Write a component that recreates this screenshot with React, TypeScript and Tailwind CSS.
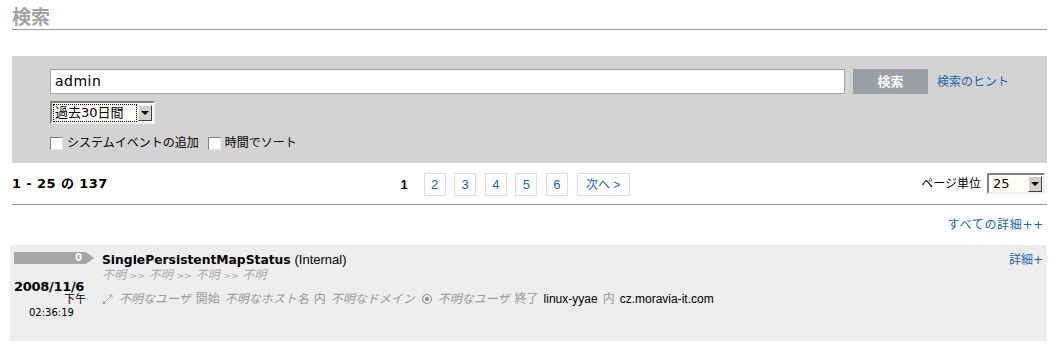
import React from "react";

const font = "font-['DejaVu_Sans','Noto_Sans_CJK_JP',sans-serif]";
const latin = "font-['Liberation_Sans','Noto_Sans_CJK_JP',sans-serif]";

const pages = ["2", "3", "4", "5", "6"];

function ArrowIcon() {
  return (
    <svg width="12" height="12" viewBox="0 0 12 12" className="shrink-0">
      <circle cx="2" cy="10" r="1.4" fill="#9a9a9a" />
      <path d="M3 9 L10 2" stroke="#b0b0b0" strokeWidth="1" fill="none" />
      <path d="M6.5 2 L10 2 L10 5.5" stroke="#b0b0b0" strokeWidth="1" fill="none" />
    </svg>
  );
}

function RadioIcon() {
  return (
    <svg width="12" height="12" viewBox="0 0 12 12" className="shrink-0">
      <circle cx="6" cy="6" r="4.5" stroke="#9a9a9a" strokeWidth="1.2" fill="none" />
      <circle cx="6" cy="6" r="2" fill="#8a8a8a" />
    </svg>
  );
}

function DropArrow() {
  return (
    <div className="w-[14px] h-[16px] bg-[#d4d0c8] border border-t-white border-l-white border-b-[#404040] border-r-[#404040] flex items-center justify-center">
      <div className="w-0 h-0 border-l-[4px] border-r-[4px] border-t-[4px] border-l-transparent border-r-transparent border-t-black" />
    </div>
  );
}

function Checkbox({ label }: { label: string }) {
  return (
    <label className="flex items-center gap-[4px]">
      <span className="w-[13px] h-[13px] bg-white border border-t-[#808080] border-l-[#808080] border-b-[#e8e8e8] border-r-[#e8e8e8]" />
      <span>{label}</span>
    </label>
  );
}

export default function App() {
  return (
    <div className={`w-[1060px] h-[348px] bg-white overflow-hidden ${font} text-[12px] text-black`}>
      <div className="pl-[12px] pr-[13px]">
        {/* Title */}
        <div className="h-[30px] pt-[6px] border-b border-[#999] text-[19px] font-bold text-[#a3a3a3] leading-[22px]">
          検索
        </div>

        {/* Search panel */}
        <div className="mt-[26px] h-[107px] bg-[#d3d3d3] pl-[38px] pt-[13px]">
          <div className="flex items-center">
            <div className="w-[795px] h-[25px] bg-white border border-[#a0a8ae] flex items-center pl-[4px] text-[14px] tracking-[0.5px]">
              admin
            </div>
            <button className="ml-[8px] w-[75px] h-[25px] bg-[#9aa0a6] text-white font-bold text-[13px]">
              検索
            </button>
            <a className="ml-[9px] text-[#1a66b0]">検索のヒント</a>
          </div>
          <div className="mt-[7px] w-[105px] h-[23px] border-2 border-t-[#808080] border-l-[#808080] border-b-[#f0f0f0] border-r-[#f0f0f0] bg-[#fffff8] flex items-center justify-between pl-[1px] pr-[1px]">
            <span className="border border-dotted border-black px-[1px] leading-[16px] w-[84px] text-[13px]">
              過去30日間
            </span>
            <DropArrow />
          </div>
          <div className="mt-[10px] flex items-center gap-[9px]">
            <Checkbox label="システムイベントの追加" />
            <Checkbox label="時間でソート" />
          </div>
        </div>

        {/* Result header */}
        <div className="h-[42px] border-b border-[#999] flex items-center relative">
          <div className="font-bold text-[13px] tracking-[0.4px]">
            1 - 25 の 137
          </div>
          <div className={`absolute left-[386px] top-[10px] flex items-center gap-[8.6px] ${latin} text-[13px]`}>
            <span className="w-[12px] mr-[5px] text-center font-bold">1</span>
            {pages.map((p) => (
              <a key={p} className="w-[22px] h-[23px] border border-[#ddd] text-[#1a66b0] flex items-center justify-center">
                {p}
              </a>
            ))}
            <a className="w-[53px] h-[23px] border border-[#ddd] text-[#1a66b0] flex items-center justify-center text-[12px]">
              次へ &gt;
            </a>
          </div>
          <div className="ml-auto flex items-center gap-[6px] mr-[2px]">
            <span>ページ単位</span>
            <div className="w-[58px] h-[21px] border-2 border-t-[#808080] border-l-[#808080] border-b-[#f0f0f0] border-r-[#f0f0f0] bg-[#fffff8] flex items-center justify-between pl-[4px] pr-[1px] text-[13px]">
              <span>25</span>
              <DropArrow />
            </div>
          </div>
        </div>

        <div className="h-[40px] flex justify-end items-center pr-[3px] text-[#1a66b0] tracking-[0.7px]">
          すべての詳細++
        </div>
      </div>

      {/* Event */}
      <div className="ml-[10px] w-[1037px] h-[96px] bg-[#eeeeee] flex pt-[6px] pl-[4px] pr-[4px]">
        <div className="w-[88px] shrink-0">
          <div className="mt-[1px] w-[80px] h-[12px] bg-[#a6a6a6] [clip-path:polygon(0_0,calc(100%-8px)_0,100%_50%,calc(100%-8px)_100%,0_100%)] flex items-center justify-end pr-[12px] text-white font-bold text-[10px] leading-none">
            0
          </div>
          <div className="mt-[16px] font-bold text-[13px] leading-[13px] tracking-[-0.3px]">2008/11/6</div>
          <div className="text-right pr-[16px] text-[11px] leading-[13px]">下午</div>
          <div className="pl-[15px] text-[10px] leading-[13px]">02:36:19</div>
        </div>
        <div className="flex-1 pt-[1px]">
          <div className="leading-[15px]">
            <span className="font-bold text-[12.3px]">SinglePersistentMapStatus</span>{" "}
            <span className={`text-[13px] ${latin}`}>(Internal)</span>
          </div>
          <div className="italic text-[#aaa] text-[12px] leading-[15px]">
            不明 <span className="text-[9px]">&gt;&gt;</span> 不明 <span className="text-[9px]">&gt;&gt;</span> 不明 <span className="text-[9px]">&gt;&gt;</span> 不明
          </div>
          <div className="mt-[6px] flex items-center gap-[5px] text-[12px] text-[#999]">
            <ArrowIcon />
            <span className="italic">不明なユーザ</span>
            <span>開始</span>
            <span className="italic">不明なホスト名</span>
            <span>内</span>
            <span className="italic">不明なドメイン</span>
            <span className="ml-[1px]"><RadioIcon /></span>
            <span className="italic">不明なユーザ</span>
            <span>終了</span>
            <span className={`text-black ${latin}`}>linux-yyae</span>
            <span>内</span>
            <span className={`text-black ${latin}`}>cz.moravia-it.com</span>
          </div>
        </div>
        <a className="text-[#1a66b0] leading-[14px] pt-[2px]">詳細+</a>
      </div>
    </div>
  );
}
